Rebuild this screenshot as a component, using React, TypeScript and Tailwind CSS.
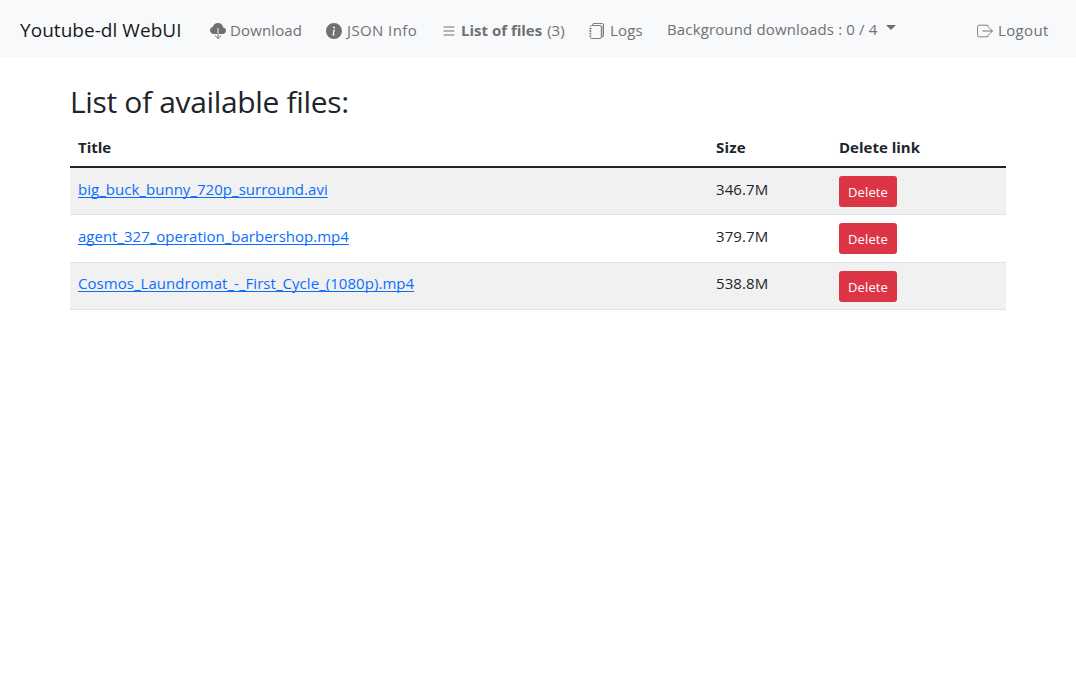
import { BsInfoCircleFill, BsList } from "react-icons/bs";

const files = [
  { name: "big_buck_bunny_720p_surround.avi", size: "346.7M", row: "h-[47px] bg-[#f1f1f1] pt-[9px]", link: "tracking-[0.03px]", button: "-mt-px" },
  { name: "agent_327_operation_barbershop.mp4", size: "379.7M", row: "h-[48px] bg-white pt-[9px]", link: "tracking-[0px]", button: "-mt-px" },
  { name: "Cosmos_Laundromat_-_First_Cycle_(1080p).mp4", size: "538.8M", row: "h-[47px] bg-[#f1f1f1] pt-2", link: "tracking-[0.045px]", button: "mt-0" },
];

function CloudIcon() {
  return (
    <svg width="16" height="16" viewBox="0 0 16 16" className="shrink-0">
      <path
        fill="currentColor"
        d="M8 0a5.53 5.53 0 0 0-3.594 1.342c-.766.66-1.321 1.52-1.464 2.383C1.266 4.095 0 5.555 0 7.318 0 9.366 1.708 11 3.781 11H12.687C14.502 11 16 9.57 16 7.773c0-1.636-1.242-2.969-2.834-3.194C12.923 1.999 10.69 0 8 0z"
      />
      <path d="M8 5v6" stroke="#f8f9fb" strokeWidth="1" />
      <path d="M8 11v4.2M5.2 12.7 8 15.4l2.8-2.7" fill="none" stroke="currentColor" strokeWidth="1" strokeLinecap="round" />
    </svg>
  );
}

function JournalsIcon() {
  return (
    <svg width="16" height="16" viewBox="0 0 16 16" className="shrink-0" fill="none" stroke="currentColor">
      <path d="M12 3h1.2l1.3-1v11l-1.2 1H12z" fill="currentColor" fillOpacity=".4" stroke="none" />
      <path d="M3.5 2.4V2A1.5 1.5 0 0 1 5 .5h8A1.5 1.5 0 0 1 14.5 2v10.5A1.5 1.5 0 0 1 13 14h-.5" strokeWidth=".9" />
      <path d="M1.5 4V3.5A1 1 0 0 1 2.5 2.5h8.5a1.3 1.3 0 0 1 1.3 1.3v10.4a1.3 1.3 0 0 1-1.3 1.3H2.5a1 1 0 0 1-1-1V14" strokeWidth=".9" />
      <path d="M1.5 5v8" strokeWidth=".8" strokeDasharray="1.4 1" />
      <path d="M0 5.5h2.5M0 8h2.5M0 10.5h2.5M0 13h2.5" strokeWidth=".8" />
    </svg>
  );
}

function ExitIcon() {
  return (
    <svg width="16" height="16" viewBox="0 0 16 16" className="shrink-0" fill="none" stroke="currentColor" strokeLinecap="round" strokeLinejoin="round">
      <path d="M11.3 11.5v1a1.3 1.3 0 0 1-1.3 1.3H2A1.4 1.4 0 0 1 .6 12.5v-9A1.4 1.4 0 0 1 2 2.2h8a1.3 1.3 0 0 1 1.3 1.3v1" strokeWidth=".85" />
      <path d="M6 8h9.3M12.6 5.2 15.4 8l-2.8 2.8" strokeWidth=".95" />
    </svg>
  );
}

export default function App() {
  return (
    <div className="min-h-screen bg-white font-['Open_Sans',sans-serif] text-[15px] leading-6 text-[#212529]">
      <nav className="flex h-[57px] items-center whitespace-nowrap bg-[#f8f9fb] pt-[5px] text-[#707071]">
        <a className="ml-5 w-[190px] pb-[3px] text-[19px] tracking-[0.04px] text-[#1a1a1b]">Youtube-dl WebUI</a>
        <a className="flex w-[116px] items-center gap-1">
          <CloudIcon />
          <span className="-mt-[3px] tracking-[0.13px]">Download</span>
        </a>
        <a className="flex w-[115px] items-center gap-1">
          <BsInfoCircleFill size={16} />
          <span className="-mt-[3px] pl-px tracking-[0.4px]">JSON Info</span>
        </a>
        <a className="flex w-[148px] items-center gap-1">
          <BsList size={16} />
          <span className="-mt-[3px] flex gap-[5px]">
            <b>List of files</b>
            <span>(3)</span>
          </span>
        </a>
        <a className="flex w-[78px] items-center gap-1">
          <JournalsIcon />
          <span className="-mt-[3px] pl-px tracking-[0.2px]">Logs</span>
        </a>
        <a className="flex items-center pb-[5px]">
          <span className="w-[219px] tracking-[0.14px]">Background downloads : 0 / 4</span>
          <span className="-mt-0.5 border-x-[5px] border-t-[5px] border-x-transparent border-t-[#707071]" />
        </a>
        <a className="ml-auto mr-7 flex w-[71px] items-center gap-1">
          <ExitIcon />
          <span className="-mt-[3px] pl-px tracking-[0.35px]">Logout</span>
        </a>
      </nav>
      <main className="mx-[70px] pt-[26px]">
        <h2 className="h-[46px] whitespace-nowrap text-[30px] leading-[38px] tracking-[-0.34px]">List of available files:</h2>
        <div className="grid h-[39px] grid-cols-[637px_124px_1fr] border-b-2 border-[#212529] pt-[6px] font-bold">
          <span className="pl-2">Title</span>
          <span className="pl-[9px] tracking-[0.2px]">Size</span>
          <span className="pl-2">Delete link</span>
        </div>
        {files.map((f) => (
          <div key={f.name} className={`grid grid-cols-[637px_124px_1fr] border-b border-[#dee2e6] ${f.row}`}>
            <span className="pl-2">
              <a className={`text-[#0d6efd] underline decoration-1 underline-offset-[2px] [text-decoration-skip-ink:none] ${f.link}`}>
                {f.name}
              </a>
            </span>
            <span className="pl-[9px] tracking-[0.1px]">{f.size}</span>
            <span className="pl-2">
              <button className={`flex h-[31px] w-[58px] items-center justify-center rounded-[3px] bg-[#dc3545] pt-px text-[13px] tracking-[0.15px] text-white ${f.button}`}>
                Delete
              </button>
            </span>
          </div>
        ))}
      </main>
    </div>
  );
}
